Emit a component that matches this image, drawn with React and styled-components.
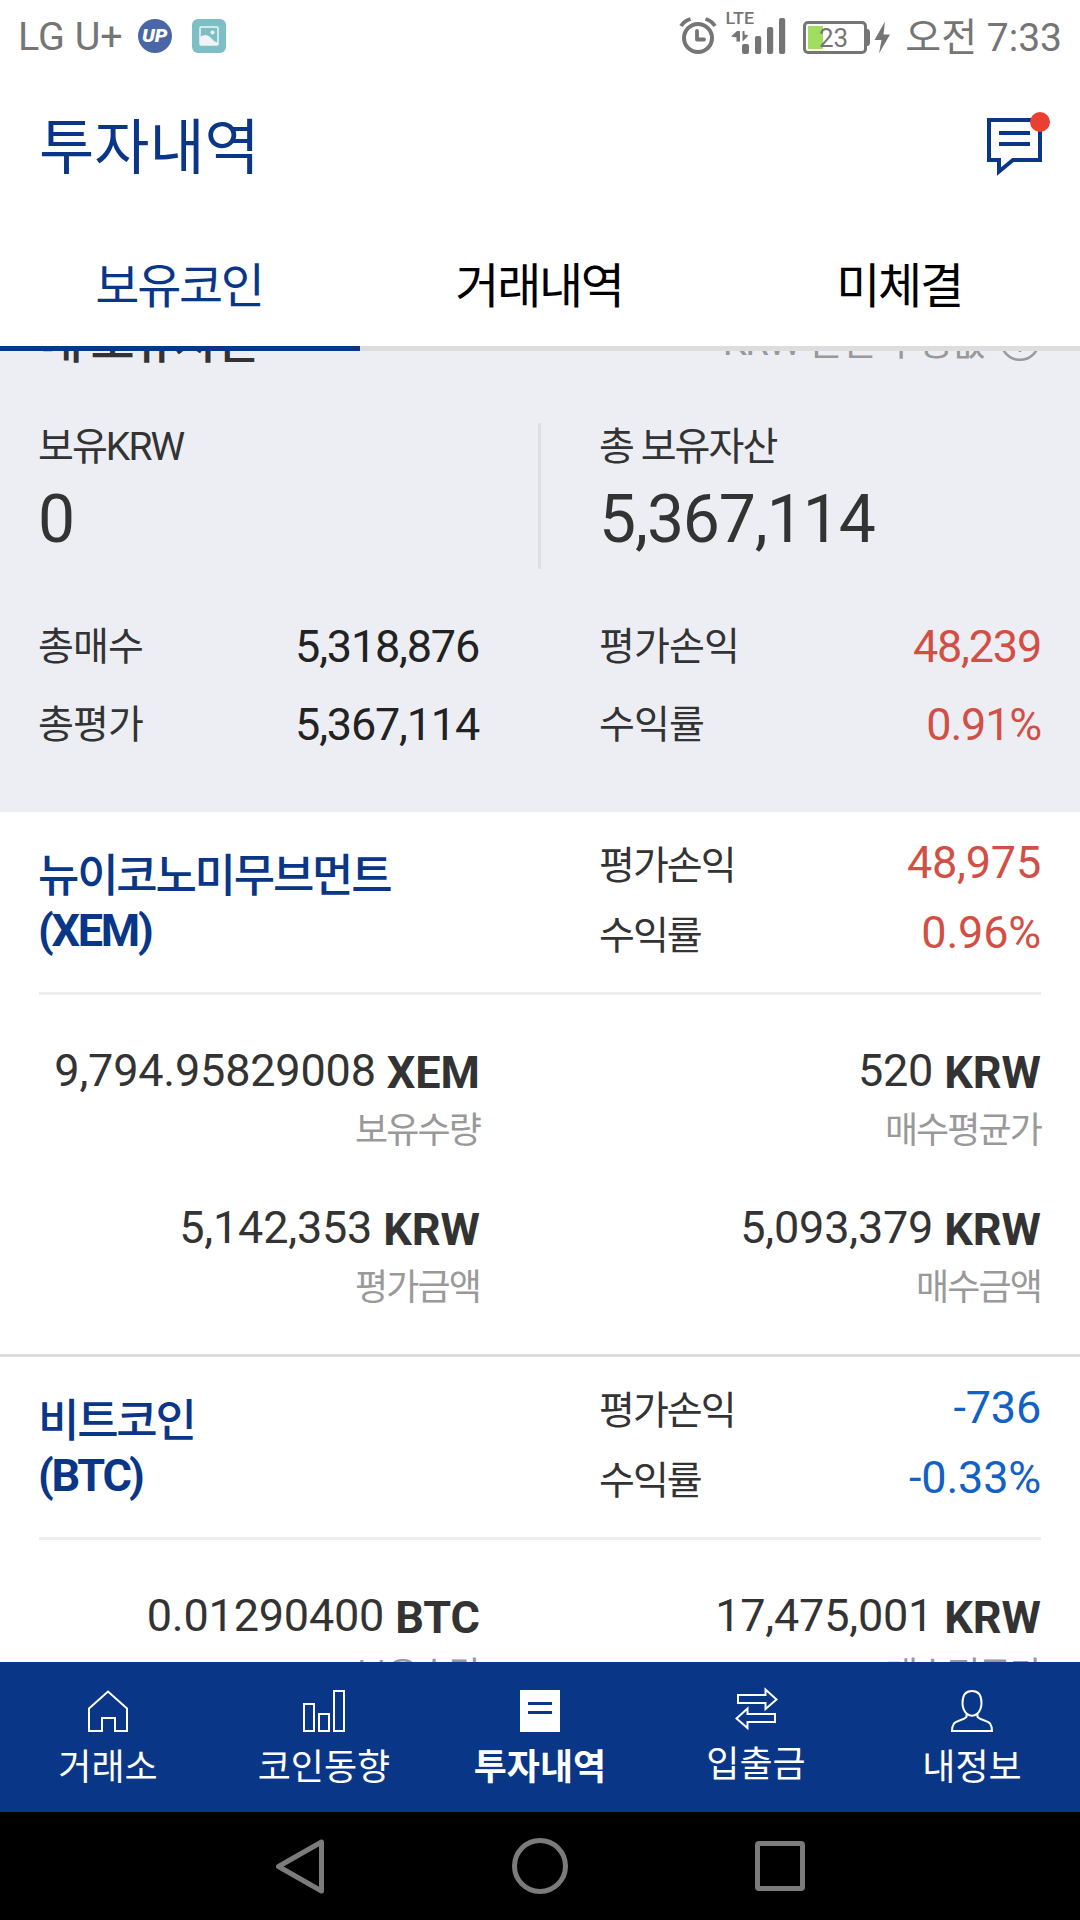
import styled, { createGlobalStyle } from "styled-components";

const GlobalStyle = createGlobalStyle`
  * {
    box-sizing: border-box;
    margin: 0;
    padding: 0;
  }
  body {
    font-family: Roboto, "Noto Sans CJK KR", sans-serif;
    background: #fff;
    color: #333;
  }
`;

const Wrap = styled.div`
  width: 1080px;
  height: 1920px;
  display: flex;
  flex-direction: column;
  overflow: hidden;
`;

/* 상태바 */
const StatusBar = styled.div`
  height: 72px;
  padding: 0 18px;
  display: flex;
  align-items: center;
  color: #757575;
  font-size: 39.5px;
  line-height: 72px;
  white-space: nowrap;
  svg {
    display: block;
    flex: none;
  }
`;

const Carrier = styled.span`
  width: 120px;
  padding-top: 2px;
`;

const StatusRight = styled.div`
  margin-left: auto;
  display: flex;
  align-items: center;
`;

const Clock = styled.span`
  margin-left: 11px;
  padding-top: 3px;
  font-size: 39px;
`;

/* 헤더 */
const Header = styled.header`
  height: 152px;
  padding: 0 30px 0 39px;
  display: flex;
  align-items: center;
  justify-content: space-between;
`;

const Title = styled.h1`
  padding-top: 2px;
  font-size: 60px;
  font-weight: 400;
  line-height: 150px;
  color: #0a3687;
`;

const Tabs = styled.nav`
  display: grid;
  grid-template-columns: repeat(3, 1fr);
  height: 127px;
  flex: none;
`;

const Tab = styled.button`
  border: 0;
  border-bottom: 5px solid ${(props) => (props.$active ? "#0a3687" : "#ddd")};
  padding: 4px 2px 0 0;
  background: #fff;
  color: ${(props) => (props.$active ? "#0a3687" : "#000")};
  font: inherit;
  font-size: 48px;
  letter-spacing: -2.3px;
  line-height: 118px;
`;

/* 스크롤 영역 */
const Scroll = styled.main`
  flex: 1;
  min-height: 0;
  overflow: hidden;
`;

const Summary = styled.section`
  margin-top: -60px;
  height: 521px;
  padding: 21px 39px 0 38px;
  background: #edeef4;
`;

const SummaryHead = styled.div`
  height: 60px;
  display: flex;
  align-items: center;
  justify-content: space-between;
`;

const SummaryTitle = styled.h2`
  padding-left: 1px;
  font-size: 48px;
  font-weight: 500;
  letter-spacing: -2.3px;
  line-height: 60px;
`;

const Notice = styled.span`
  display: flex;
  align-items: center;
  gap: 14px;
  font-size: 38.5px;
  letter-spacing: -1.6px;
  line-height: 60px;
  color: #999;
`;

const TwoCol = styled.div`
  display: grid;
  grid-template-columns: 441px 442px;
  column-gap: 120px;
`;

const Totals = styled.div`
  display: flex;
  height: 146px;
  margin-top: 51px;
`;

const Total = styled.div`
  width: 503px;
  &:first-child {
    border-right: 3px solid #dedfe2;
  }
  &:last-child {
    width: 500px;
    padding-left: 58px;
  }
`;

const TotalLabel = styled.p`
  padding-top: 1px;
  font-size: 39px;
  letter-spacing: -1.95px;
  line-height: 46px;
`;

const TotalValue = styled.p`
  margin-top: 12px;
  font-size: 66px;
  letter-spacing: -1.1px;
  line-height: 76px;
`;

const SumRows = styled(TwoCol)`
  margin-top: 39px;
`;

const SumRow = styled.div`
  height: 78px;
  display: flex;
  align-items: center;
  justify-content: space-between;
  line-height: 78px;
`;

const Label = styled.span`
  font-size: 39px;
  letter-spacing: ${(props) => props.$spacing || "-0.9px"};
`;

const colors = { up: "#d24f45", down: "#1261c4", plain: "#222" };

const Value = styled.span`
  font-size: 45px;
  letter-spacing: ${(props) => props.$spacing || "-0.2px"};
  color: ${(props) => colors[props.$tone]};
`;

/* 코인 카드 */
const Card = styled.section`
  height: 545px;
  border-bottom: 3px solid #ddd;
`;

const CardHead = styled.div`
  height: 183px;
  margin: 0 39px;
  border-bottom: 3px solid #eee;
  display: grid;
  grid-template-columns: 560px 442px;
`;

const CoinName = styled.h3`
  margin-left: -1px;
  padding-top: 38px;
  font-size: 45px;
  font-weight: 500;
  letter-spacing: -2.25px;
  line-height: 54px;
  color: #0a3687;
  white-space: nowrap;
  b {
    display: block;
    font-weight: 700;
  }
`;

const Pnl = styled.div`
  padding-top: 16px;
`;

const PnlRow = styled.div`
  height: 70px;
  display: flex;
  justify-content: space-between;
  line-height: 70px;
  ${Label} {
    padding-top: 3px;
  }
`;

const CardBody = styled(TwoCol)`
  grid-template-columns: 441px 441px;
  padding: 46px 39px 0;
  row-gap: 37px;
`;

const Amount = styled.div`
  text-align: right;
  font-size: 45px;
  letter-spacing: -0.2px;
  line-height: 60px;
  height: 120px;
  white-space: nowrap;
`;

const Unit = styled.b`
  font-weight: 700;
  line-height: 1;
  vertical-align: -2px;
  letter-spacing: 0;
`;

const AmountLabel = styled.p`
  font-size: 36px;
  letter-spacing: -1.9px;
  color: #999;
`;

/* 하단 메뉴 */
const BottomNav = styled.nav`
  height: 150px;
  flex: none;
  display: grid;
  grid-template-columns: repeat(5, 1fr);
  background: #0a3687;
`;

const NavItem = styled.a`
  display: flex;
  flex-direction: column;
  align-items: center;
  padding-top: 28px;
  color: #fff;
  font-size: 36px;
  font-weight: ${(props) => (props.$active ? 700 : 400)};
  line-height: 48px;
  svg {
    display: block;
    margin-bottom: 12px;
  }
`;

const SystemNav = styled.div`
  height: 108px;
  flex: none;
  display: flex;
  justify-content: center;
  align-items: center;
  gap: 180px;
  background: #000;
  svg {
    display: block;
  }
`;

const UpText = styled.text`
  font-family: Roboto, sans-serif;
  font-size: 17.5px;
  font-weight: 900;
  font-style: italic;
`;

const LteText = styled.text`
  font-family: Roboto, sans-serif;
  font-size: 16.5px;
  font-weight: 500;
`;

const BatteryText = styled.text`
  font-family: Roboto, sans-serif;
  font-size: 26px;
`;

const StatusIcons = () => (
  <svg width="216" height="48" viewBox="678 12 216 48" fill="#757575" overflow="visible">
    {/* 알람 */}
    <g fill="none" stroke="#757575" strokeWidth="4">
      <circle cx="698" cy="38" r="14" />
      <path d="M697 31v8.500h7" strokeWidth="3.800" strokeLinecap="round" strokeLinejoin="round" />
      <path d="M681 26q3-5 9.500-7M715 26q-3-5-9.500-7" strokeWidth="3.800" />
    </g>
    <LteText x="725.500" y="24" textLength="28.500" lengthAdjust="spacingAndGlyphs">
      LTE
    </LteText>
    {/* 신호 */}
    <path d="M731 36.500l6-5.500h3v10.500h-3.500v-4zM748.500 35.500l-6 6V31h2v3.500z" />
    <rect x="742" y="44" width="7" height="10" rx="2" />
    <rect x="755" y="36" width="6.200" height="18" rx="2" />
    <rect x="767" y="27" width="6.200" height="27" rx="2" />
    <rect x="779" y="18" width="6.200" height="36" rx="2" />
    {/* 배터리 */}
    <rect x="808" y="26" width="15" height="23" fill="#a0de60" />
    <rect
      x="804.500"
      y="22.500"
      width="61"
      height="30"
      rx="3.500"
      fill="none"
      stroke="#757575"
      strokeWidth="3"
    />
    <path d="M866 29h2q2 1 2 3v11q0 2-2 3h-2z" />
    <BatteryText x="819" y="46.500">
      23
    </BatteryText>
    <path d="M885 21.500L874.500 40h7L879 53.500 890 34.500h-6.500z" />
  </svg>
);

const UpIcon = () => (
  <svg width="34" height="34" viewBox="0 0 34 34">
    <circle cx="17" cy="17" r="17" fill="#4967a7" />
    <UpText x="4" y="23.200" fill="#fff" textLength="25.500" lengthAdjust="spacingAndGlyphs">
      UP
    </UpText>
  </svg>
);

const GalleryIcon = styled.svg`
  margin-left: 20px;
`;

const ChatIcon = () => (
  <svg width="64" height="64" viewBox="986 116 64 64" overflow="visible">
    <g fill="none" stroke="#0a3687" strokeWidth="4">
      <path d="M989 120h51v40h-27l-14 11.500V160h-10z" />
      <path d="M999 133h31M999 144h31" />
    </g>
    <circle cx="1040" cy="122" r="10" fill="#ea4034" />
  </svg>
);

const navItems = [
  {
    name: "거래소",
    icon: <path d="M2 18.500L21 1.500l19 17V41H28V28H15v13H2z" />,
  },
  {
    name: "코인동향",
    icon: <path d="M1 14h10v27H1zM16 24h10v17H16zM31 1h10v40H31z" />,
  },
  {
    name: "투자내역",
    active: true,
    icon: (
      <>
        <path d="M1 0h40v42H1z" fill="#fff" stroke="none" />
        <path d="M9 13.500h24M9 22.500h24" stroke="#0a3687" strokeWidth="3" />
      </>
    ),
  },
  {
    name: "입출금",
    h: 39,
    icon: (
      <path d="M3 5h27.500V-.5L41.500 9.500 30.500 19v-6H3zM40 24H12.500v-5.500L1.500 28.500l11 9.500v-6H40z" />
    ),
  },
  {
    name: "내정보",
    icon: (
      <path d="M21 1c-6.500 0-9.500 4.500-9.500 12 0 5 1.500 8 4 10.500V27c-3 3-10 3.500-12.500 6.500Q1 36.500 1 41h40q0-4.500-2-7.500C36.500 30.500 29.500 30 26.500 27v-3.500c2.500-2.500 4-5.500 4-10.500C30.500 5.500 27.500 1 21 1zM15.500 23.500q5.500 4.500 11 0" />
    ),
  },
];

const coins = [
  {
    name: "뉴이코노미무브먼트",
    code: "XEM",
    tone: "up",
    profit: "48,975",
    rate: "0.96%",
    amounts: [
      ["9,794.95829008", "XEM", "보유수량"],
      ["520", "KRW", "매수평균가"],
      ["5,142,353", "KRW", "평가금액"],
      ["5,093,379", "KRW", "매수금액"],
    ],
  },
  {
    name: "비트코인",
    code: "BTC",
    tone: "down",
    profit: "-736",
    rate: "-0.33%",
    amounts: [
      ["0.01290400", "BTC", "보유수량"],
      ["17,475,001", "KRW", "매수평균가"],
    ],
  },
];

const sums = [
  ["총매수", "5,318,876", "plain"],
  ["평가손익", "48,239", "up"],
  ["총평가", "5,367,114", "plain"],
  ["수익률", "0.91%", "up"],
];

const CoinCard = ({ coin }) => (
  <Card>
    <CardHead>
      <CoinName>
        {coin.name}
        <b>({coin.code})</b>
      </CoinName>
      <Pnl>
        <PnlRow>
          <Label $spacing="-1.95px">평가손익</Label>
          <Value $tone={coin.tone}>{coin.profit}</Value>
        </PnlRow>
        <PnlRow>
          <Label $spacing="-1.95px">수익률</Label>
          <Value $tone={coin.tone}>{coin.rate}</Value>
        </PnlRow>
      </Pnl>
    </CardHead>
    <CardBody>
      {coin.amounts.map(([value, unit, label]) => (
        <Amount key={label}>
          {value} <Unit>{unit}</Unit>
          <AmountLabel>{label}</AmountLabel>
        </Amount>
      ))}
    </CardBody>
  </Card>
);

export default function App() {
  return (
    <Wrap>
      <GlobalStyle />
      <StatusBar>
        <Carrier>LG U+</Carrier>
        <UpIcon />
        <GalleryIcon width="34" height="34" viewBox="0 0 34 34">
          <rect width="34" height="34" rx="6" fill="#7dbfc4" />
          <rect x="8" y="8" width="18" height="18" rx="1" fill="none" stroke="#f0f4f5" strokeWidth="1.500" />
          <path d="M8 18q6-4 10 0 3 4 8 6v2H8z" fill="#f0f4f5" />
          <circle cx="20.500" cy="13.500" r="2" fill="#f0f4f5" />
        </GalleryIcon>
        <StatusRight>
          <StatusIcons />
          <Clock>오전 7:33</Clock>
        </StatusRight>
      </StatusBar>

      <Header>
        <Title>투자내역</Title>
        <ChatIcon />
      </Header>

      <Tabs>
        <Tab $active>보유코인</Tab>
        <Tab>거래내역</Tab>
        <Tab>미체결</Tab>
      </Tabs>

      <Scroll>
        <Summary>
          <SummaryHead>
            <SummaryTitle>내 보유자산</SummaryTitle>
            <Notice>
              KRW 환산 추정값
              <svg width="42" height="42" viewBox="0 0 42 42" fill="none" stroke="#999" strokeWidth="2.500">
                <circle cx="21" cy="20" r="18.800" />
                <path d="M15 15q0-6 6-6t6 6q0 3-6 7v3M21 28v3" />
              </svg>
            </Notice>
          </SummaryHead>
          <Totals>
            <Total>
              <TotalLabel>보유KRW</TotalLabel>
              <TotalValue>0</TotalValue>
            </Total>
            <Total>
              <TotalLabel>총 보유자산</TotalLabel>
              <TotalValue>5,367,114</TotalValue>
            </Total>
          </Totals>
          <SumRows>
            {sums.map(([label, value, tone]) => (
              <SumRow key={label}>
                <Label>{label}</Label>
                <Value $tone={tone} $spacing="-1.2px">
                  {value}
                </Value>
              </SumRow>
            ))}
          </SumRows>
        </Summary>
        {coins.map((coin) => (
          <CoinCard key={coin.code} coin={coin} />
        ))}
      </Scroll>

      <BottomNav>
        {navItems.map((item) => (
          <NavItem key={item.name} $active={item.active}>
            <svg
              width="42"
              height={item.h || 42}
              viewBox={`0 0 42 ${item.h || 42}`}
              fill="none"
              stroke="#fff"
              strokeWidth="2"
              overflow="visible"
            >
              {item.icon}
            </svg>
            {item.name}
          </NavItem>
        ))}
      </BottomNav>

      <SystemNav>
        <svg width="60" height="60" viewBox="0 0 60 60" fill="none" stroke="#7b7b7b" strokeWidth="5" strokeLinejoin="round">
          <path d="M8.500 30.500L51.500 6v49z" />
        </svg>
        <svg width="60" height="60" viewBox="0 0 60 60" fill="none" stroke="#7b7b7b" strokeWidth="5">
          <circle cx="30" cy="30" r="25.500" />
        </svg>
        <svg width="60" height="60" viewBox="0 0 60 60" fill="none" stroke="#7b7b7b" strokeWidth="5">
          <rect x="7.500" y="7.500" width="45" height="45" rx="1.500" />
        </svg>
      </SystemNav>
    </Wrap>
  );
}
